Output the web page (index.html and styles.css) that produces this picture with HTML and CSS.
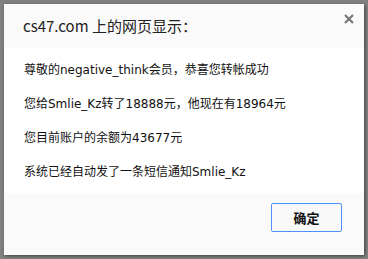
FILE: index.html
```html
<!DOCTYPE html>
<html lang="zh-CN">
  <head>
    <meta charset="UTF-8" />
    <title>cs47.com 上的网页显示</title>
    <link rel="stylesheet" href="styles.css">
  </head>
  <body>
    <div class="dialog">
      <div class="dialog-head">
        <span class="dialog-title">cs47.com 上的网页显示：</span>
        <svg class="close-btn" width="10" height="10" viewBox="0 0 10 10">
          <path d="M1 1 L9 9 M9 1 L1 9" stroke="#777" stroke-width="2.2" />
        </svg>
      </div>
      <div class="dialog-body">
        <p>尊敬的negative_think会员，恭喜您转帐成功</p>
        <p>您给Smlie_Kz转了18888元，他现在有18964元</p>
        <p>您目前账户的余额为43677元</p>
        <p>系统已经自动发了一条短信通知Smlie_Kz</p>
      </div>
      <div class="dialog-foot">
        <button class="ok-btn">确定</button>
      </div>
    </div>
  </body>
</html>
```

FILE: styles.css
```css
body {
  margin: 0;
  background: #808080;
  font-family: "DejaVu Sans", "Noto Sans CJK SC", sans-serif;
  width: 368px;
  height: 259px;
  overflow: hidden;
}

.dialog {
  margin: 4px 0 0 4px;
  width: 360px;
  height: 251px;
  background: #fafafa;
  box-shadow: 1px 1px 3px rgba(0, 0, 0, 0.5);
  display: flex;
  flex-direction: column;
}

.dialog-head {
  height: 44px;
  display: flex;
  align-items: center;
  justify-content: space-between;
  padding: 0 10px 0 19px;
}

.dialog-title {
  font-family: "Noto Sans CJK SC", sans-serif;
  font-size: 15px;
  color: #222;
  margin-top: -2px;
}

.close-btn {
  margin-top: -14px;
}

.dialog-body {
  background: #fff;
  height: 145px;
  padding: 5px 20px 0 20px;
  box-sizing: border-box;
}

.dialog-body p {
  margin: 0;
  font-size: 12px;
  line-height: 34px;
  color: #111;
}

.dialog-foot {
  flex: 1;
  display: flex;
  justify-content: flex-end;
  align-items: flex-start;
  padding: 10px 22px 0 0;
}

.ok-btn {
  width: 71px;
  height: 29px;
  border: 1px solid #4d90fe;
  border-radius: 2px;
  background: #f9f9f9;
  font-family: "Noto Sans CJK SC", sans-serif;
  font-size: 13px;
  font-weight: bold;
  color: #111;
}
```
